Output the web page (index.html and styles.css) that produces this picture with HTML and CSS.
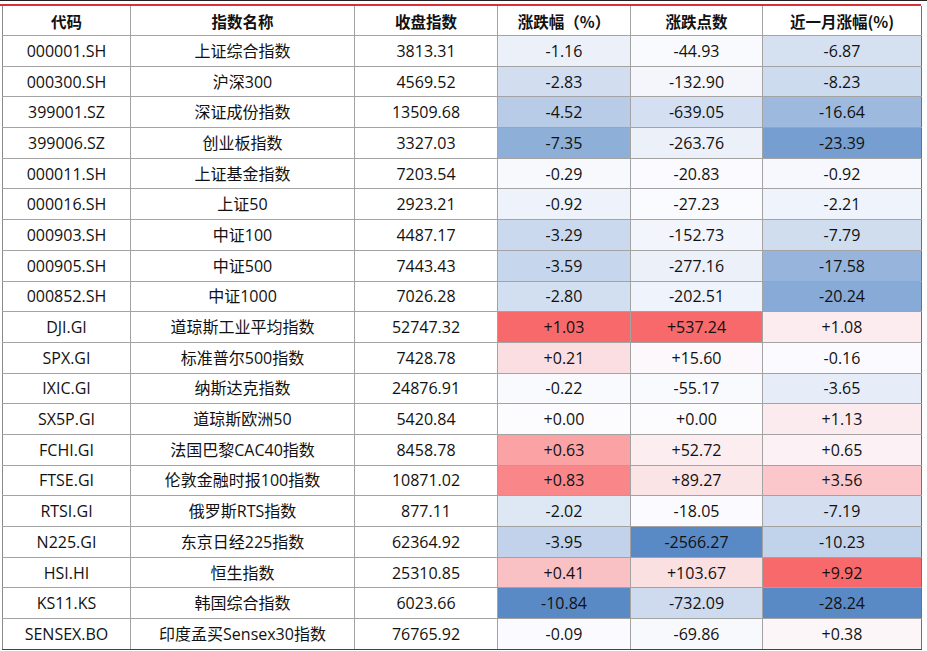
FILE: index.html
```html
<!DOCTYPE html>
<html lang="zh-CN">
<head>
<meta charset="utf-8">
<title>指数涨跌</title>
<link rel="stylesheet" href="styles.css">
</head>
<body>
<div class="topline"></div>
<div class="sheet">
<table class="tbl">
<colgroup>
<col class="c1"><col class="c2"><col class="c3"><col class="c4"><col class="c5"><col class="c6">
</colgroup>
<thead>
<tr><th>代码</th><th>指数名称</th><th>收盘指数</th><th>涨跌幅（%）</th><th>涨跌点数</th><th>近一月涨幅(%)</th></tr>
</thead>
<tbody id="rows">
<tr><td>000001.SH</td><td>上证综合指数</td><td>3813.31</td><td class="h h1">-1.16</td><td class="h h2">-44.93</td><td class="h h3">-6.87</td></tr>
<tr><td>000300.SH</td><td>沪深300</td><td>4569.52</td><td class="h h1">-2.83</td><td class="h h2">-132.90</td><td class="h h3">-8.23</td></tr>
<tr><td>399001.SZ</td><td>深证成份指数</td><td>13509.68</td><td class="h h1">-4.52</td><td class="h h2">-639.05</td><td class="h h3">-16.64</td></tr>
<tr><td>399006.SZ</td><td>创业板指数</td><td>3327.03</td><td class="h h1">-7.35</td><td class="h h2">-263.76</td><td class="h h3">-23.39</td></tr>
<tr><td>000011.SH</td><td>上证基金指数</td><td>7203.54</td><td class="h h1">-0.29</td><td class="h h2">-20.83</td><td class="h h3">-0.92</td></tr>
<tr><td>000016.SH</td><td>上证50</td><td>2923.21</td><td class="h h1">-0.92</td><td class="h h2">-27.23</td><td class="h h3">-2.21</td></tr>
<tr><td>000903.SH</td><td>中证100</td><td>4487.17</td><td class="h h1">-3.29</td><td class="h h2">-152.73</td><td class="h h3">-7.79</td></tr>
<tr><td>000905.SH</td><td>中证500</td><td>7443.43</td><td class="h h1">-3.59</td><td class="h h2">-277.16</td><td class="h h3">-17.58</td></tr>
<tr><td>000852.SH</td><td>中证1000</td><td>7026.28</td><td class="h h1">-2.80</td><td class="h h2">-202.51</td><td class="h h3">-20.24</td></tr>
<tr><td>DJI.GI</td><td>道琼斯工业平均指数</td><td>52747.32</td><td class="h h1">+1.03</td><td class="h h2">+537.24</td><td class="h h3">+1.08</td></tr>
<tr><td>SPX.GI</td><td>标准普尔500指数</td><td>7428.78</td><td class="h h1">+0.21</td><td class="h h2">+15.60</td><td class="h h3">-0.16</td></tr>
<tr><td>IXIC.GI</td><td>纳斯达克指数</td><td>24876.91</td><td class="h h1">-0.22</td><td class="h h2">-55.17</td><td class="h h3">-3.65</td></tr>
<tr><td>SX5P.GI</td><td>道琼斯欧洲50</td><td>5420.84</td><td class="h h1">+0.00</td><td class="h h2">+0.00</td><td class="h h3">+1.13</td></tr>
<tr><td>FCHI.GI</td><td>法国巴黎CAC40指数</td><td>8458.78</td><td class="h h1">+0.63</td><td class="h h2">+52.72</td><td class="h h3">+0.65</td></tr>
<tr><td>FTSE.GI</td><td>伦敦金融时报100指数</td><td>10871.02</td><td class="h h1">+0.83</td><td class="h h2">+89.27</td><td class="h h3">+3.56</td></tr>
<tr><td>RTSI.GI</td><td>俄罗斯RTS指数</td><td>877.11</td><td class="h h1">-2.02</td><td class="h h2">-18.05</td><td class="h h3">-7.19</td></tr>
<tr><td>N225.GI</td><td>东京日经225指数</td><td>62364.92</td><td class="h h1">-3.95</td><td class="h h2">-2566.27</td><td class="h h3">-10.23</td></tr>
<tr><td>HSI.HI</td><td>恒生指数</td><td>25310.85</td><td class="h h1">+0.41</td><td class="h h2">+103.67</td><td class="h h3">+9.92</td></tr>
<tr><td>KS11.KS</td><td>韩国综合指数</td><td>6023.66</td><td class="h h1">-10.84</td><td class="h h2">-732.09</td><td class="h h3">-28.24</td></tr>
<tr><td>SENSEX.BO</td><td>印度孟买Sensex30指数</td><td>76765.92</td><td class="h h1">-0.09</td><td class="h h2">-69.86</td><td class="h h3">+0.38</td></tr>
</tbody>
</table>
</div>
<script src="script.js"></script>
</body>
</html>
```

FILE: styles.css
```css
html, body {
  margin: 0;
  padding: 0;
  background: #ffffff;
}
body {
  font-family: "Open Sans", "Noto Sans CJK SC", sans-serif;
  color: #111111;
}
.topline {
  height: 1px;
  background: #222222;
  margin-bottom: 3px;
}
.sheet {
  width: 921px;
  border-top: 2px solid #d9303c;
}
.tbl {
  border-collapse: collapse;
  margin-left: 2px;
  width: 919px;
  table-layout: fixed;
  font-size: 16px;
}
.c1 { width: 128px; }
.c2 { width: 224px; }
.c3 { width: 143px; }
.c4 { width: 133px; }
.c5 { width: 132px; }
.c6 { width: 159px; }
.tbl th, .tbl td {
  border: 1px solid #a3a3a3;
  text-align: center;
  padding: 0;
  white-space: nowrap;
  line-height: 20px;
}
.tbl th {
  height: 29px;
  font-weight: 700;
  font-family: "Noto Sans CJK SC", sans-serif;
  font-size: 15.5px;
  border-top: none;
}
.tbl td {
  height: 29.7px;
}
.tbl th:first-child, .tbl td:first-child {
  border-left-color: #8a8a8a;
}
.tbl th:last-child, .tbl td:last-child {
  border-right-color: #707070;
}
.tbl tbody tr:last-child td {
  border-bottom: 1px solid #444444;
}
```

FILE: script.js
```js
(function () {
  var blue = [90, 138, 198], white = [252, 252, 255], red = [248, 105, 107];
  ["h1", "h2", "h3"].forEach(function (cls) {
    var cells = Array.prototype.slice.call(document.querySelectorAll("td." + cls));
    var vals = cells.map(function (c) { return parseFloat(c.textContent); });
    var min = Math.min.apply(null, vals), max = Math.max.apply(null, vals);
    cells.forEach(function (c, i) {
      var v = vals[i], t, end;
      if (v < 0) { t = v / min; end = blue; } else { t = max > 0 ? v / max : 0; end = red; }
      var rgb = white.map(function (w, k) { return Math.round(w + (end[k] - w) * t); });
      c.style.backgroundColor = "rgb(" + rgb.join(",") + ")";
    });
  });
})();
```
